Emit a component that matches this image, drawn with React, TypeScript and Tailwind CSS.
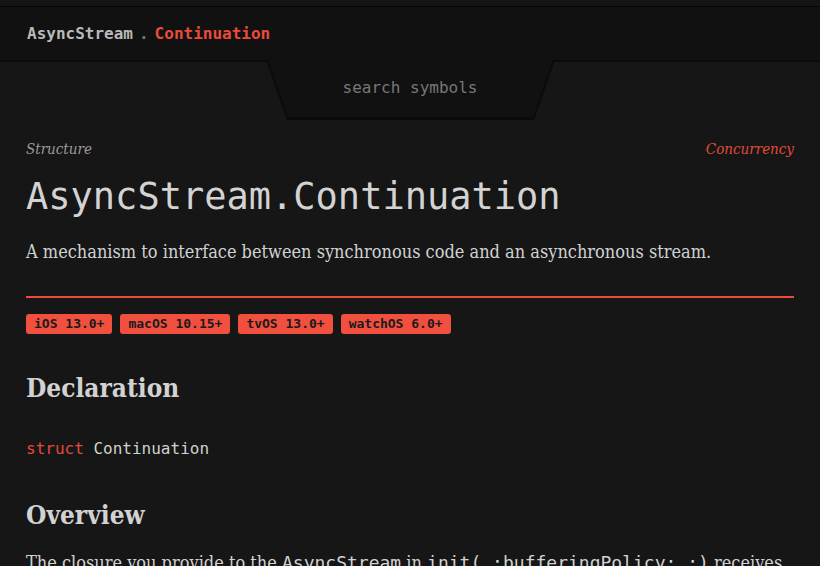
const mono = "font-['DejaVu_Sans_Mono','Liberation_Mono',monospace]";
const serif = "font-['DejaVu_Serif_Condensed','DejaVu_Serif','Liberation_Serif',serif] [font-stretch:condensed]";

const platforms = ["iOS 13.0+", "macOS 10.15+", "tvOS 13.0+", "watchOS 6.0+"];

function SearchTab() {
  return (
    <div className="relative mx-auto -mt-[2px] h-[60px] w-[289px]">
      <svg
        className="absolute inset-0"
        width="289"
        height="60"
        viewBox="0 0 289 60"
      >
        <polygon points="0,0 289,0 268,60 21,60" fill="#0b0b0b" />
        <polygon points="2,0 287,0 267,57 22,57" fill="#111111" />
      </svg>
      <div
        className={`relative flex h-[55px] items-center justify-center text-[16px] text-[#777777] ${mono}`}
      >
        search symbols
      </div>
    </div>
  );
}

export default function App() {
  return (
    <div className="h-[566px] overflow-hidden bg-[#161616]">
      {/* top strip */}
      <div className="h-[7px] border-b border-[#050505] bg-[#141414]" />

      {/* Header */}
      <div className="flex h-[55px] items-center border-b-2 border-[#0b0b0b] bg-[#111111] px-[27px]">
        <div className={`flex items-center text-[16px] font-bold ${mono}`}>
          <span className="text-[#b9b9b9]">AsyncStream</span>
          <span className="mx-[6px] text-[#777777]">.</span>
          <span className="text-[#ea4c3c]">Continuation</span>
        </div>
      </div>

      <SearchTab />

      {/* Body */}
      <div className="px-[26px]">
        <div
          className={`mt-[18px] flex items-center justify-between text-[15px] italic ${serif}`}
        >
          <span className="text-[#9a9a9a]">Structure</span>
          <span className="text-[#e24a3a]">Concurrency</span>
        </div>

        <h1
          className={`mt-[14px] text-[37px] leading-[44px] font-light text-[#d3d3d3] ${mono}`}
        >
          AsyncStream.Continuation
        </h1>

        <p className={`mt-[19px] text-[18px] text-[#d2d2d2] ${serif}`}>
          A mechanism to interface between synchronous code and an asynchronous
          stream.
        </p>

        <div className="mt-[31px] h-[2px] bg-[#ea4c3c]" />

        <div className="mt-[16px] flex gap-[8px]">
          {platforms.map((p) => (
            <span
              key={p}
              className={`rounded-[3px] bg-[#f1503f] px-[8px] text-[13px] leading-[20px] font-bold text-[#1a1a1a] ${mono}`}
            >
              {p}
            </span>
          ))}
        </div>

        <h2
          className={`mt-[35px] text-[26px] font-bold text-[#d2d2d2] ${serif}`}
        >
          Declaration
        </h2>

        <div className={`mt-[29px] text-[16px] text-[#d0d0d0] ${mono}`}>
          <span className="text-[#e24a3a]">struct</span> Continuation
        </div>

        <h2
          className={`mt-[35px] text-[26px] font-bold text-[#d2d2d2] ${serif}`}
        >
          Overview
        </h2>

        <p className={`mt-[14px] text-[18px] text-[#d2d2d2] ${serif}`}>
          The closure you provide to the{" "}
          <code className={`text-[18px] ${mono}`}>AsyncStream</code> in{" "}
          <code className={`text-[18px] ${mono}`}>init(_:bufferingPolicy:_:)</code>{" "}
          receives an instance of this type when invoked.
        </p>
      </div>
    </div>
  );
}
